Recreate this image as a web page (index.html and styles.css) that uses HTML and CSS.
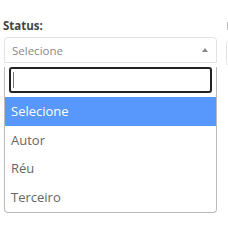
FILE: index.html
```html
<!DOCTYPE html>
<html lang="pt-BR">
<head>
  <meta charset="UTF-8">
  <title>Status</title>
  <link rel="stylesheet" href="styles.css">
</head>
<body>
  <div class="row">
    <div class="field">
      <label class="field-label">Status:</label>
      <div class="select open">
        <span class="select-value">Selecione</span>
        <span class="select-arrow"></span>
      </div>
      <div class="dropdown">
        <div class="search"><span class="caret"></span></div>
        <ul class="options">
          <li class="option active">Selecione</li>
          <li class="option">Autor</li>
          <li class="option">Réu</li>
          <li class="option">Terceiro</li>
        </ul>
      </div>
    </div>

    <!-- próxima coluna, cortada na borda -->
    <div class="field">
      <span class="field-label label-stub"></span>
      <div class="select"></div>
    </div>
  </div>
</body>
</html>
```

FILE: styles.css
```css
body {
  margin: 0;
  font-family: 'Open Sans', 'Liberation Sans', sans-serif;
  color: #555;
  background: #fff;
  overflow: hidden;
}

.row {
  display: flex;
  gap: 9px;
  padding: 19px 0 0 4px;
}

.field {
  width: 213px;
  flex-shrink: 0;
}

.field-label {
  display: block;
  margin-left: -1px;
  font-size: 11.5px;
  font-weight: 700;
  line-height: 14px;
  color: #444;
  margin-bottom: 4px;
}

/* só o primeiro traço do rótulo vizinho aparece */
.label-stub {
  height: 14px;
  margin-left: 1px;
}

.label-stub::before {
  content: "";
  display: block;
  width: 2px;
  height: 8px;
  margin-top: 3px;
  background: #bbb;
}

.select {
  position: relative;
  box-sizing: border-box;
  height: 26px;
  border: 1px solid #e3e3e3;
  border-radius: 4px;
  padding: 0 7px;
  display: flex;
  align-items: center;
}

.select.open {
  border-bottom-left-radius: 0;
  border-bottom-right-radius: 0;
}

.select-value {
  font-size: 11.5px;
  color: #888;
}

.select-arrow {
  position: absolute;
  right: 8px;
  top: 10px;
  width: 0;
  height: 0;
  border-left: 3px solid transparent;
  border-right: 3px solid transparent;
  border-bottom: 4px solid #888;
}

.dropdown {
  box-sizing: border-box;
  border: 1px solid #bbb;
  border-top: none;
  border-radius: 0 0 4px 4px;
  background: #fff;
}

.search {
  box-sizing: border-box;
  height: 26px;
  margin: 4px;
  border: 2px solid #222;
  border-radius: 3px;
  padding: 3px 2px;
}

.caret {
  display: block;
  width: 1px;
  height: 16px;
  background: #777;
}

.options {
  list-style: none;
  margin: 0;
  padding: 0;
}

.option {
  height: 28.7px;
  line-height: 28.7px;
  padding: 0 6px;
  font-size: 13px;
  color: #666;
}

.option.active {
  background: #5897fb;
  color: #fff;
}
```
